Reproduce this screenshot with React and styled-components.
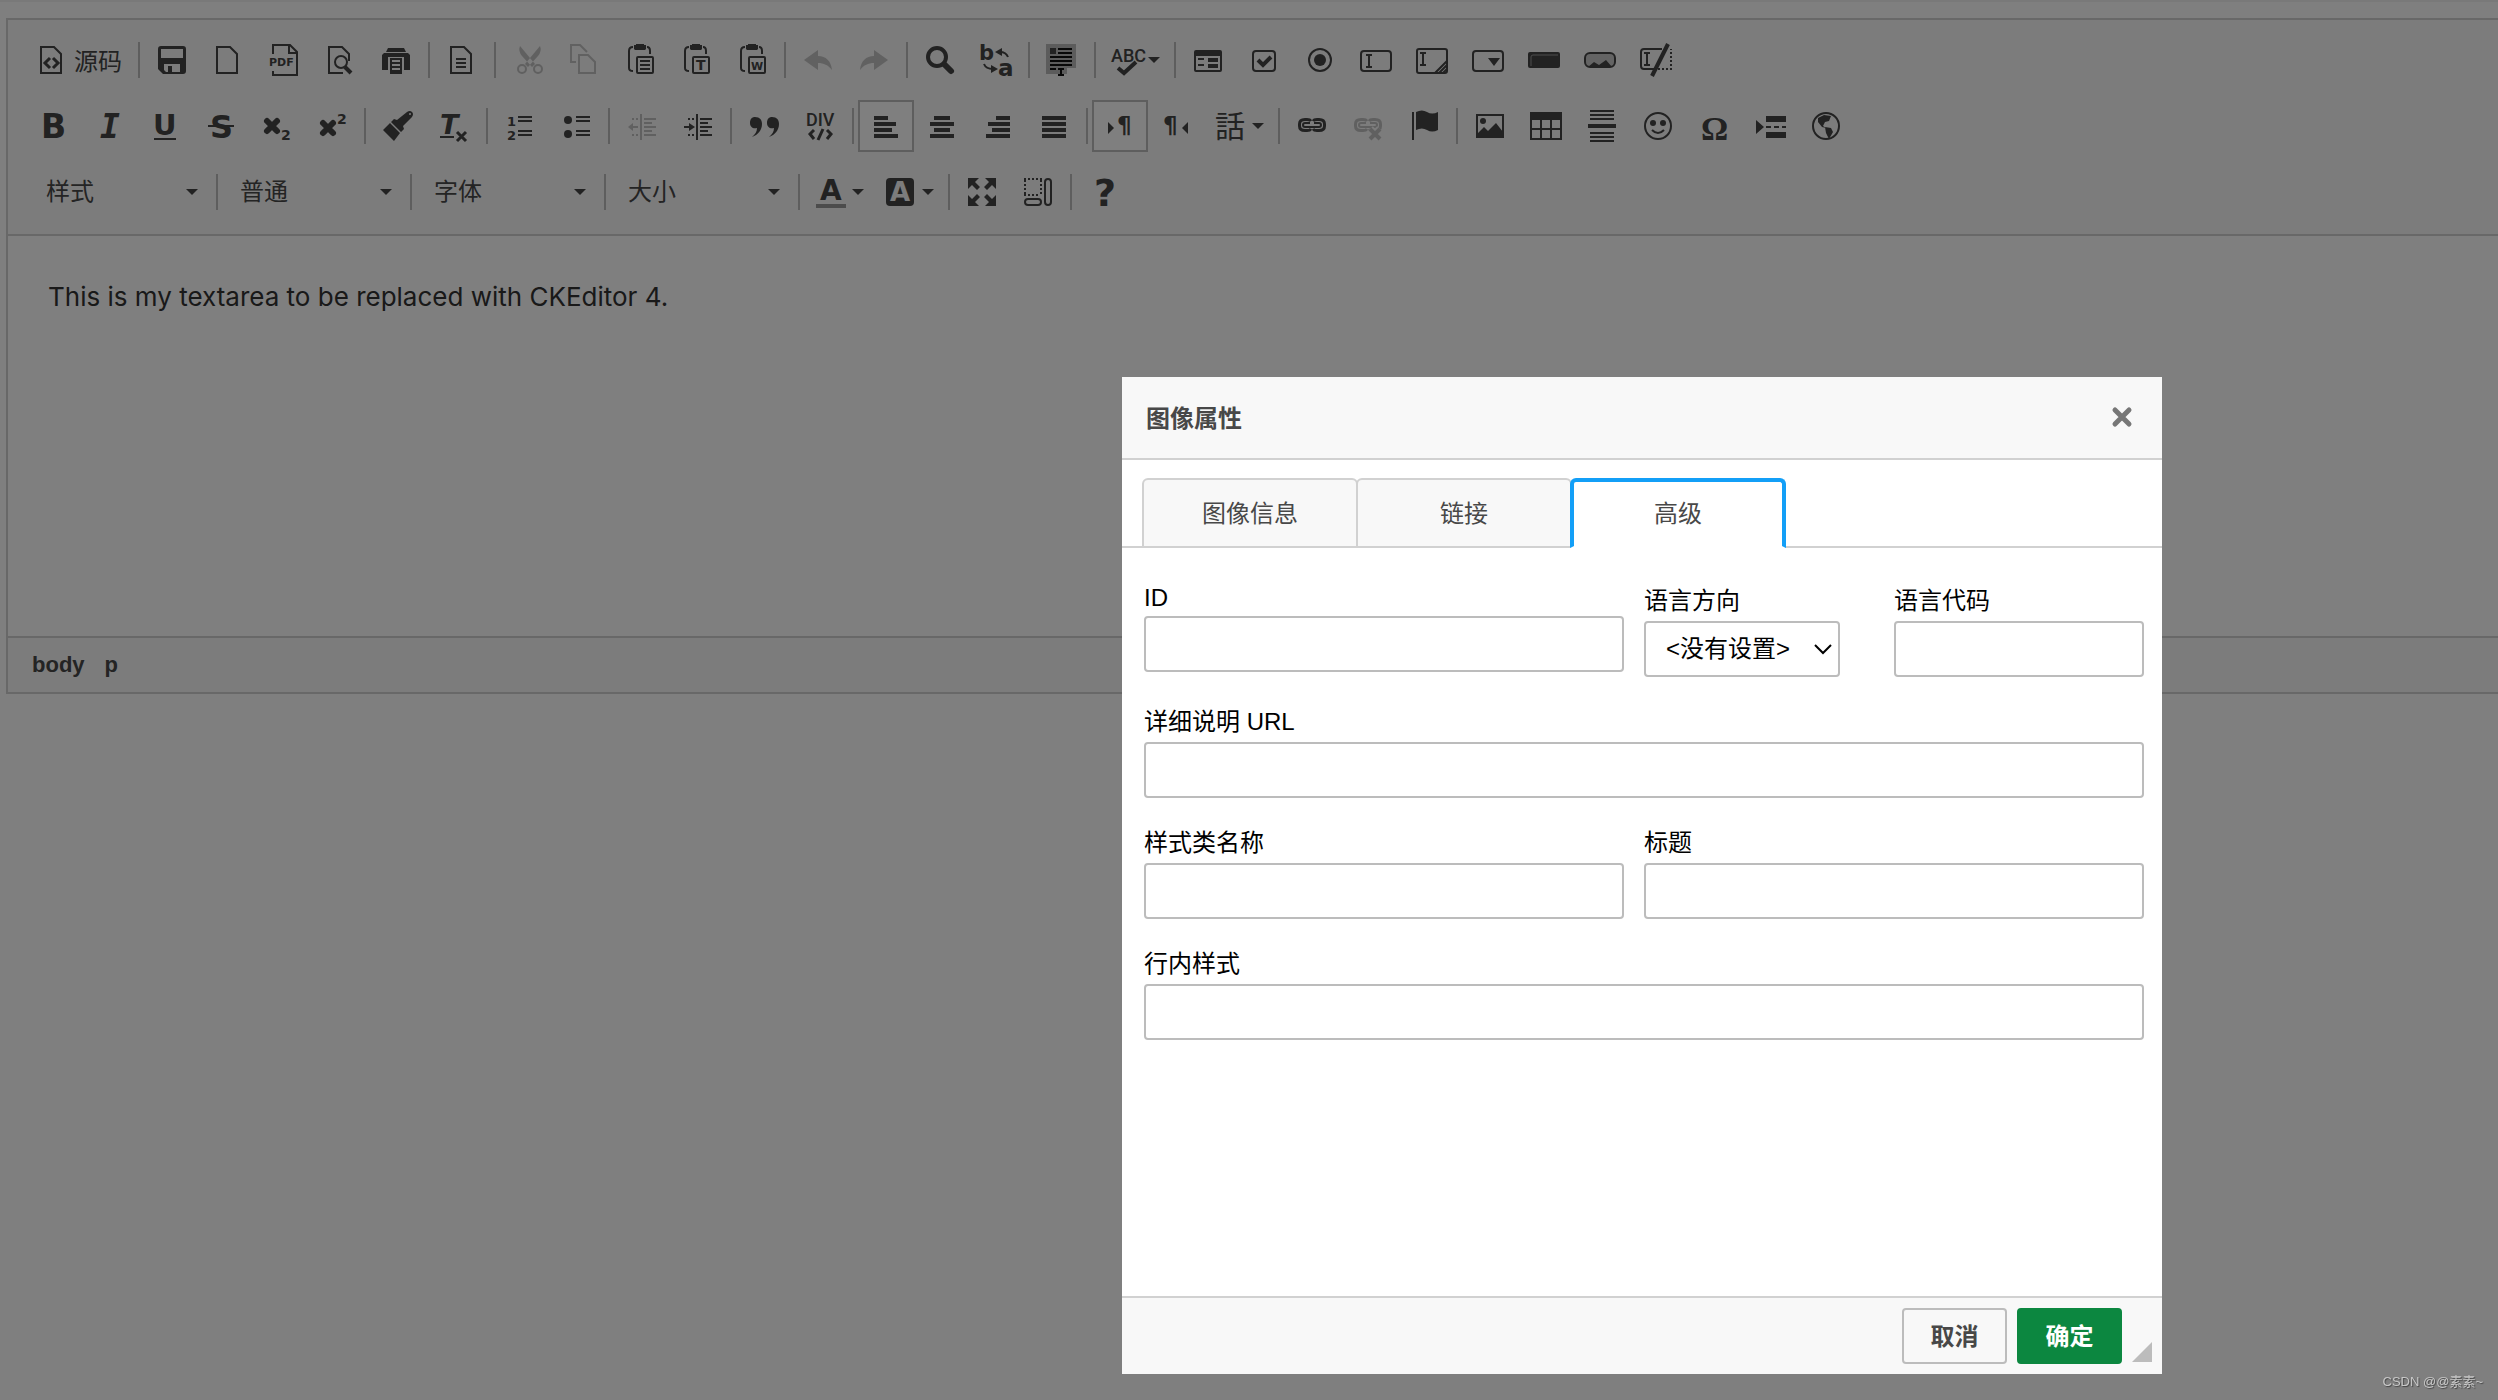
import styled, { createGlobalStyle } from 'styled-components'

const GlobalStyle = createGlobalStyle`
  * {
    box-sizing: border-box;
  }
  body {
    margin: 0;
    background: #fff;
    font-family: 'Liberation Sans', 'Noto Sans CJK SC', sans-serif;
    overflow: hidden;
  }
  button, input, select {
    font: inherit;
    color: inherit;
    margin: 0;
  }
`

const Page = styled.div`
  min-height: 100vh;
  border-top: 2px solid #f2f2f2;
  padding: 16px 0 0 6px;
`

const Editor = styled.main`
  border: 2px solid #d1d1d1;
  border-right: none;
`

const Toolbar = styled.div`
  display: flex;
  flex-direction: column;
  gap: 14px;
  padding: 14px 16px 16px;
  background: #f8f8f8;
  border-bottom: 2px solid #d1d1d1;
`

const ToolRow = styled.div`
  display: flex;
  align-items: center;
  height: 52px;
  padding-left: ${(props) => (props.$indent ? '4px' : '0')};
`

const Separator = styled.span`
  width: 2px;
  height: 36px;
  margin: 0 4px;
  background: #bcbcbc;
`

const ToolButton = styled.button`
  display: flex;
  align-items: center;
  gap: 4px;
  height: 52px;
  padding: 0 10px;
  border: 2px solid ${(props) => (props.$active ? '#bcbcbc' : 'transparent')};
  background: ${(props) => (props.$active ? '#fff' : 'none')};
  color: #444;
  font-size: 24px;
  padding-right: ${(props) => (props.$menu ? '8px' : '10px')};

  &:disabled svg {
    opacity: 0.3;
  }
`

const ToolText = styled.span`
  padding: 0 0 2px 2px;
`

const Icon = styled.svg`
  width: 32px;
  height: 32px;
  flex: none;
  fill: none;
  stroke: currentColor;
  stroke-width: 2;
  overflow: visible;

  text {
    fill: currentColor;
    stroke: none;
    font-family: 'DejaVu Sans', sans-serif;
    font-weight: bold;
  }
  .fill {
    fill: currentColor;
    stroke: none;
  }
`

const CaretIcon = styled.svg`
  width: 12px;
  height: 6px;
  flex: none;
  fill: #444;
`

const Combo = styled.label`
  display: flex;
  align-items: center;
  width: 184px;
  height: 52px;
  padding: 0 14px 0 18px;
  color: #484848;
`

const ComboSelect = styled.select`
  appearance: none;
  flex: 1;
  min-width: 0;
  border: none;
  padding: 0 0 2px;
  background: none;
  font-size: 24px;
`

const Content = styled.div`
  height: 400px;
  padding: 43px 40px;
  font-family: Inter, sans-serif;
  font-size: 26px;
  line-height: 36px;
  color: #333;

  p {
    margin: 0;
  }
`

const PathBar = styled.nav`
  display: flex;
  align-items: center;
  gap: 20px;
  height: 56px;
  padding: 0 24px;
  border-top: 2px solid #d1d1d1;
  background: #f8f8f8;
`

const PathLink = styled.a`
  color: #484848;
  font-size: 22px;
  font-weight: bold;
  text-decoration: none;
`

const Cover = styled.div`
  position: fixed;
  inset: 0;
  display: flex;
  justify-content: flex-end;
  padding: 377px 336px 26px;
  background: rgba(0, 0, 0, 0.5);
`

const Dialog = styled.section`
  display: flex;
  flex-direction: column;
  width: 1040px;
  background: #fff;
  color: #000;
  font-size: 24px;
`

const DialogHeader = styled.header`
  display: flex;
  align-items: center;
  justify-content: space-between;
  height: 83px;
  padding: 0 28px 2px 24px;
  border-bottom: 2px solid #d1d1d1;
  background: #f8f8f8;
  color: #484848;
`

const DialogTitle = styled.h1`
  margin: 0;
  font-size: 24px;
`

const CloseButton = styled.button`
  display: flex;
  padding: 0;
  border: none;
  background: none;
  color: #777;
`

const Tabs = styled.div`
  display: flex;
  height: 88px;
  padding: 18px 20px 0;
  box-shadow: inset 0 -2px 0 #d1d1d1;
`

const Tab = styled.button`
  width: 216px;
  height: 70px;
  padding: 0 0 4px;
  margin-right: -2px;
  border: 2px solid #d1d1d1;
  border-radius: 6px 6px 0 0;
  background: #f8f8f8;
  color: #484848;

  &[aria-selected='true'] {
    border: 4px solid #139ff7;
    border-bottom: 2px solid #fff;
    padding-bottom: 6px;
    background: #fff;
    z-index: 1;
  }
`

const Form = styled.form`
  display: flex;
  flex-direction: column;
  flex: 1;
  gap: 26px;
  padding: 34px 18px 34px 22px;
`

const FormRow = styled.div`
  display: grid;
  grid-template-columns: ${(props) => props.$columns || '1fr'};
  gap: ${(props) => props.$gap || '20px'};
  align-items: start;
`

const Field = styled.div`
  display: flex;
  flex-direction: column;
`

const Label = styled.label`
  padding-bottom: 2px;
  line-height: ${(props) => (props.$latin ? '32px' : '37px')};
`

const TextInput = styled.input`
  width: 100%;
  height: 56px;
  padding: 8px 12px;
  border: 2px solid #bcbcbc;
  border-radius: 4px;
  background: #fff;
`

const SelectBox = styled.div`
  display: flex;
  align-items: center;
  width: 196px;
  height: 56px;
  padding: 0 6px 0 20px;
  border: 2px solid #bcbcbc;
  border-radius: 4px;

  select {
    appearance: none;
    flex: 1;
    min-width: 0;
    padding: 0 0 2px;
    border: none;
    background: none;
  }
`

const DialogFooter = styled.footer`
  display: flex;
  align-items: center;
  justify-content: flex-end;
  gap: 10px;
  height: 78px;
  padding-right: 10px;
  border-top: 2px solid #d1d1d1;
  background: #f8f8f8;
`

const DialogButton = styled.button`
  width: 105px;
  height: 56px;
  padding: 0 0 4px;
  border: 2px solid ${(props) => (props.$primary ? '#0c8740' : '#bcbcbc')};
  border-radius: 4px;
  background: ${(props) => (props.$primary ? '#0c8740' : '#f8f8f8')};
  color: ${(props) => (props.$primary ? '#fff' : '#484848')};
  font-weight: bold;
`

const Grip = styled.svg`
  width: 20px;
  height: 20px;
  align-self: flex-end;
  margin-bottom: 12px;
  fill: #bcbcbc;
`

const Watermark = styled.div`
  position: fixed;
  right: 15px;
  bottom: 8px;
  color: #c8c8c8;
  font-size: 13px;
  line-height: 20px;
  text-shadow: 1px 1px 1px #444;
`

const page = 'M5 3h13l7 7v19H5z'

const Clipboard = ({ children }) => (
  <>
    <path d="M9 3q-4 0-4 4v17q0 3 4 3M23 3q3 0 3 4v3" />
    <path className="fill" d="M12 0h8v1h2v4l-1 1H11l-1-1V1h2z" />
    <rect x="13" y="13" width="16" height="16" rx="1" />
    {children}
  </>
)

const Chain = () => (
  <>
    <path strokeWidth="3" d="M15 11q-1-1.500-4-1.500H9Q3.500 9.500 3.500 14v2Q3.500 20.500 9 20.500h2q3 0 4-1.500M17 11q1-1.500 4-1.500h2Q28.500 9.500 28.500 14v2Q28.500 20.500 23 20.500h-2q-3 0-4-1.500" />
    <path d="M14 13H9q-2 0-2 2t2 2h14q2 0 2-2t-2-2h-5" />
  </>
)

const icons = {
  source: (
    <>
      <path d={page} />
      <path strokeWidth="3" d="M14 14l-5 5 5 5M17 14l5 5-5 5" />
    </>
  ),
  save: (
    <>
      <path
        className="fill"
        fillRule="evenodd"
        d="M5 2h22a3 3 0 013 3v22a3 3 0 01-3 3H7l-5-5V5a3 3 0 013-3zM5 5v9h22V5zM8 20v6l2 2h14v-8z"
      />
      <path className="fill" d="M12 22h4v7h-4z" />
    </>
  ),
  newPage: <path d={page} />,
  pdf: (
    <>
      <path d="M5 10V1h17l7 7v23H5v-4M21 1v8h8" />
      <text x="1" y="22" fontSize="11">PDF</text>
    </>
  ),
  preview: (
    <>
      <path d="M19 29H5V3h13l7 7v7" />
      <circle cx="17" cy="18" r="6" />
      <path strokeWidth="4" d="M21 23l6 6" />
    </>
  ),
  print: (
    <>
      <path className="fill" d="M8 4h16l2 4H6zM4 9h24l2 2v15h-6V13H8v13H2V11z" />
      <path d="M11 15h10v14H11zM12 19h8M12 23h8M11 27h10" />
    </>
  ),
  templates: <path d={`${page}M10 15h10M10 19h10M10 23h10`} />,
  cut: (
    <>
      <path className="fill" d="M8 2q-2 5 2 10l10 11 3-3zM28 2q2 5-2 10L16 23l-3-3z" />
      <circle cx="10" cy="25" r="4" />
      <circle cx="26" cy="25" r="4" />
    </>
  ),
  copy: <path d="M8 18H3V1h9l7 7M11 11h9l7 7v11H11z" />,
  paste: (
    <Clipboard>
      <path d="M16 17h10M16 21h10M16 25h10" />
    </Clipboard>
  ),
  pasteText: (
    <Clipboard>
      <text x="16" y="26" fontSize="14">T</text>
    </Clipboard>
  ),
  pasteWord: (
    <Clipboard>
      <text x="15" y="26" fontSize="11">W</text>
    </Clipboard>
  ),
  undo: <path className="fill" d="M2 16L16 6v6c8 0 13 5 14 14-4-5-8-7-14-7v7z" />,
  redo: <path className="fill" d="M30 16L16 6v6C8 12 3 17 2 26c4-5 8-7 14-7v7z" />,
  find: (
    <>
      <circle cx="13" cy="13" r="9" strokeWidth="4" />
      <path strokeWidth="6" strokeLinecap="round" d="M21 21l6 6" />
    </>
  ),
  replace: (
    <>
      <text x="-1" y="16" fontSize="21">b</text>
      <text x="18" y="32" fontSize="23">a</text>
      <path d="M28 13q-2-5-8-5M4 20q2 5 9 5" />
      <path className="fill" d="M22 4v8l-7-4zM11 21v8l7-4z" />
    </>
  ),
  selectAll: (
    <>
      <path fill="#b8b8b8" stroke="none" d="M0 0h30v24h-9v6H0z" />
      <path className="fill" d="M4 4h6v6H4z" />
      <path stroke="#111" d="M12 5h14M12 9h14M4 13h22M4 17h22M4 21h22M4 25h6M12 25h6M12 31h6M15 25v6" />
    </>
  ),
  spell: (
    <>
      <text x="-1" y="18" fontSize="18" style={{ fontFamily: 'Liberation Sans Narrow, Roboto', fontWeight: 500 }}>ABC</text>
      <path strokeWidth="4" d="M6 24l6 5 12-11" />
    </>
  ),
  form: (
    <>
      <rect x="3" y="7" width="26" height="20" rx="1" />
      <path className="fill" d="M3 7h26v5H3zM16 14h10v4H16zM16 20h10v4H16z" />
      <path d="M6 15h6M6 21h6" />
    </>
  ),
  checkbox: (
    <>
      <rect x="5" y="7" width="22" height="20" rx="3" />
      <path strokeWidth="4" d="M10 16l5 5 8-8" />
    </>
  ),
  radio: (
    <>
      <circle cx="16" cy="16" r="11" />
      <circle className="fill" cx="16" cy="16" r="6" />
    </>
  ),
  textField: (
    <>
      <rect x="1" y="7" width="30" height="20" rx="3" />
      <path d="M6 11h6M6 23h6M9 11v12" />
    </>
  ),
  textArea: (
    <>
      <rect x="1" y="5" width="30" height="24" rx="2" />
      <path d="M4 9h6M4 21h6M7 9v12M19 29l12-12M23 29l8-8M27 29l4-4" />
    </>
  ),
  select: (
    <>
      <rect x="1" y="7" width="30" height="20" rx="3" />
      <path className="fill" d="M16 14h12l-6 8z" />
    </>
  ),
  pushButton: (
    <>
      <rect className="fill" x="0" y="8" width="32" height="16" rx="2" />
      <path stroke="#999" strokeWidth="1" d="M3 22v-9q0-2 2-2h25" />
    </>
  ),
  imageButton: (
    <>
      <rect x="1" y="9" width="30" height="14" rx="5" fill="#c8c8c8" />
      <path className="fill" d="M4 23l6-5 5 3 7-5 6 7z" />
    </>
  ),
  hidden: (
    <>
      <path d="M22 5H4q-3 0-3 3v14q0 3 3 3h11M4 9h6M4 21h6M7 9v12" />
      <path strokeDasharray="2 2" d="M18 25h13V5" />
      <path strokeWidth="4" d="M28 0L12 32" />
    </>
  ),
  bold: <text x="5" y="28" fontSize="33">B</text>,
  italic: <text x="8" y="28" fontSize="33" fontStyle="italic" style={{ fontFamily: 'DejaVu Sans Mono' }}>I</text>,
  underline: (
    <>
      <text x="5" y="25" fontSize="29">U</text>
      <path d="M6 29h22" />
    </>
  ),
  strike: (
    <>
      <text x="6" y="28" fontSize="32">S</text>
      <path d="M4 16h26" />
    </>
  ),
  subscript: (
    <>
      <path strokeWidth="6" strokeLinecap="round" d="M7 11l10 10M17 11L7 21" />
      <text x="21" y="30" fontSize="14">2</text>
    </>
  ),
  superscript: (
    <>
      <path strokeWidth="6" strokeLinecap="round" d="M7 13l10 10M17 13L7 23" />
      <text x="21" y="14" fontSize="14">2</text>
    </>
  ),
  brush: (
    <>
      <path className="fill" d="M25 2q3-2 5 0t0 5l-9 9 1 3-3 3L9 12l3-3 3 1zM8 13l10 10-6 8L1 20z" />
      <circle cx="28" cy="4" r="1" fill="#f8f8f8" stroke="none" />
    </>
  ),
  removeFormat: (
    <>
      <text x="2" y="24" fontSize="27" fontStyle="italic">T</text>
      <path d="M2 27h14" />
      <path strokeWidth="3" d="M19 22l9 9M28 22l-9 9" />
    </>
  ),
  numbered: (
    <>
      <text x="3" y="16" fontSize="13">1</text>
      <text x="3" y="30" fontSize="13">2</text>
      <path d="M14 7h14M14 11h14M14 21h14M14 25h14" />
    </>
  ),
  bulleted: (
    <>
      <circle className="fill" cx="8" cy="10" r="4" />
      <circle className="fill" cx="8" cy="24" r="4" />
      <path d="M16 7h14M16 11h14M16 21h14M16 25h14" />
    </>
  ),
  outdent: (
    <>
      <path d="M15 4v26M18 9h12M18 13h8M18 17h12M18 21h8M18 25h12M6 17h6M6 9h2M10 9h2M6 25h2M10 25h2" />
      <path className="fill" d="M7 13v8l-5-4z" />
    </>
  ),
  indent: (
    <>
      <path d="M15 4v26M18 9h12M18 13h8M18 17h12M18 21h8M18 25h12M2 17h6M6 9h2M10 9h2M6 25h2M10 25h2" />
      <path className="fill" d="M7 13v8l6-4z" />
    </>
  ),
  quote: (
    <path
      className="fill"
      d="M7 7c5 0 7 3 7 7 0 6-4 11-10 13 3-3 5-5 5-9-4 1-7-1-7-5 0-4 2-6 5-6zM24 7c5 0 7 3 7 7 0 6-4 11-10 13 3-3 5-5 5-9-4 1-7-1-7-5 0-4 2-6 5-6z"
    />
  ),
  div: (
    <>
      <text x="2" y="16" fontSize="18" style={{ fontFamily: 'Liberation Sans Narrow, Roboto', fontWeight: 500 }}>DIV</text>
      <path strokeWidth="3" d="M10 20l-4 4 4 5M23 20l4 4-4 5M19 19l-5 11" />
    </>
  ),
  alignLeft: <path strokeWidth="4" d="M4 8h14M4 14h22M4 20h18M4 26h24" />,
  alignCenter: <path strokeWidth="4" d="M8 8h16M4 14h24M8 20h16M4 26h24" />,
  alignRight: <path strokeWidth="4" d="M14 8h14M6 14h22M10 20h18M4 26h24" />,
  alignBlock: <path strokeWidth="4" d="M4 8h24M4 14h24M4 20h24M4 26h24" />,
  ltr: (
    <>
      <path className="fill" d="M4 12v12l6-6z" />
      <text x="13" y="23" fontSize="23">¶</text>
    </>
  ),
  rtl: (
    <>
      <path className="fill" d="M28 12v12l-6-6z" />
      <text x="3" y="23" fontSize="23">¶</text>
    </>
  ),
  language: <text x="-1" y="27" fontSize="30" style={{ fontFamily: 'Noto Sans CJK JP', fontWeight: 400 }}>話</text>,
  link: <Chain />,
  unlink: (
    <>
      <Chain />
      <path strokeWidth="8" stroke="#f8f8f8" d="M18 19l10 10M28 19L18 29" />
      <path strokeWidth="4" d="M18 19l10 10M28 19L18 29" />
    </>
  ),
  anchor: (
    <>
      <path d="M5 2v28" />
      <path className="fill" d="M8 2q6-3 11 0t11 0v18q-6 3-11 0t-11 0z" />
    </>
  ),
  image: (
    <>
      <path d="M3 5h26v22H3z" />
      <circle className="fill" cx="9" cy="11" r="3" />
      <path className="fill" d="M4 27v-4l6-6 4 4 8-8 7 9v5z" />
    </>
  ),
  table: (
    <>
      <path className="fill" d="M0 2h32v8H0z" />
      <path d="M1 3h30v26H1zM1 19h30M11 9v20M21 9v20" />
    </>
  ),
  rule: (
    <>
      <path d="M4 1h24M4 5h24M4 9h24M4 23h24M4 27h24M4 31h24" />
      <path strokeWidth="4" d="M2 16h28" />
    </>
  ),
  smiley: (
    <>
      <circle cx="16" cy="16" r="13" />
      <circle className="fill" cx="11" cy="13" r="3" />
      <circle className="fill" cx="21" cy="13" r="3" />
      <path d="M10 20q6 6 12 0" />
    </>
  ),
  special: <text x="3" y="30" fontSize="34" style={{ fontFamily: 'Liberation Serif' }}>Ω</text>,
  pageBreak: (
    <>
      <path className="fill" d="M2 10l8 7-8 7zM12 6h20v6H12zM12 22h20v6H12z" />
      <path d="M12 17h5M20 17h5M28 17h4" />
    </>
  ),
  iframe: (
    <>
      <circle cx="16" cy="16" r="13" />
      <path className="fill" d="M8 8l6-3 7 1-2 5-4 1-2 4 3 2-4-1-4-5zM15 17l6 1 2 4-4 7-3-6z" />
    </>
  ),
  textColor: (
    <>
      <text x="4" y="24" fontSize="28">A</text>
      <path stroke="#999" strokeWidth="4" d="M0 30h30" />
    </>
  ),
  bgColor: (
    <>
      <rect className="fill" x="0" y="2" width="28" height="28" rx="4" />
      <text x="4" y="25" fontSize="26" style={{ fill: '#f8f8f8' }}>A</text>
    </>
  ),
  maximize: (
    <path
      className="fill"
      d="M2 2h11l-4 4 5 5-3 3-5-5-4 4zM30 2v11l-4-4-5 5-3-3 5-5-4-4zM2 30V19l4 4 5-5 3 3-5 5 4 4zM30 30H19l4-4-5-5 3-3 5 5 4-4z"
    />
  ),
  showBlocks: (
    <>
      <path strokeDasharray="2 2" d="M2 3h18M19 4v16M2 19h16M3 4v14" />
      <rect x="3" y="23" width="16" height="6" rx="3" />
      <rect x="23" y="3" width="6" height="26" rx="3" />
    </>
  ),
  about: <text x="6" y="30" fontSize="38">?</text>,
}

const Caret = () => (
  <CaretIcon viewBox="0 0 12 6">
    <path d="M0 0h12L6 6z" />
  </CaretIcon>
)

const Tool = ({ name, label, menu, active, disabled, children }) => (
  <ToolButton type="button" aria-label={label} $active={active} $menu={menu} disabled={disabled}>
    <Icon viewBox="0 0 32 32">{icons[name]}</Icon>
    {children && <ToolText>{children}</ToolText>}
    {menu && <Caret />}
  </ToolButton>
)

const rows = [
  [
    [{ name: 'source', label: '源码', text: '源码' }],
    ['save', 'newPage', 'pdf', 'preview', 'print'],
    ['templates'],
    [{ name: 'cut', disabled: true }, { name: 'copy', disabled: true }, 'paste', 'pasteText', 'pasteWord'],
    [{ name: 'undo', disabled: true }, { name: 'redo', disabled: true }],
    ['find', 'replace'],
    ['selectAll'],
    [{ name: 'spell', menu: true }],
    ['form', 'checkbox', 'radio', 'textField', 'textArea', 'select', 'pushButton', 'imageButton', 'hidden'],
  ],
  [
    ['bold', 'italic', 'underline', 'strike', 'subscript', 'superscript'],
    ['brush', 'removeFormat'],
    ['numbered', 'bulleted'],
    [{ name: 'outdent', disabled: true }, 'indent'],
    ['quote', 'div'],
    [{ name: 'alignLeft', active: true }, 'alignCenter', 'alignRight', 'alignBlock'],
    [{ name: 'ltr', active: true }, 'rtl', { name: 'language', menu: true }],
    ['link', { name: 'unlink', disabled: true }, 'anchor'],
    ['image', 'table', 'rule', 'smiley', 'special', 'pageBreak', 'iframe'],
  ],
  [
    [{ combo: '样式' }],
    [{ combo: '普通' }],
    [{ combo: '字体' }],
    [{ combo: '大小' }],
    [{ name: 'textColor', menu: true }, { name: 'bgColor', menu: true }],
    ['maximize', 'showBlocks'],
    ['about'],
  ],
]

const ToolItem = ({ item }) => {
  if (typeof item === 'string') return <Tool name={item} label={item} />
  if (item.combo) {
    return (
      <Combo>
        <ComboSelect aria-label={item.combo}>
          <option>{item.combo}</option>
        </ComboSelect>
        <Caret />
      </Combo>
    )
  }
  const { text, label = item.name, ...rest } = item
  return (
    <Tool label={label} {...rest}>
      {text}
    </Tool>
  )
}

const ToolGroup = ({ items, first }) => (
  <>
    {!first && <Separator />}
    {items.map((item, i) => (
      <ToolItem key={i} item={item} />
    ))}
  </>
)

const TextField = ({ id, label, latin }) => (
  <Field>
    <Label htmlFor={id} $latin={latin}>{label}</Label>
    <TextInput id={id} type="text" />
  </Field>
)

const ImageDialog = () => (
  <Dialog role="dialog" aria-labelledby="dialog-title">
    <DialogHeader>
      <DialogTitle id="dialog-title">图像属性</DialogTitle>
      <CloseButton type="button" aria-label="关闭">
        <svg width="24" height="24" fill="none" stroke="currentColor" strokeWidth="5" strokeLinecap="round">
          <path d="M5 5l14 14M19 5L5 19" />
        </svg>
      </CloseButton>
    </DialogHeader>

    <Tabs role="tablist">
      <Tab type="button" role="tab" aria-selected="false">图像信息</Tab>
      <Tab type="button" role="tab" aria-selected="false">链接</Tab>
      <Tab type="button" role="tab" aria-selected="true">高级</Tab>
    </Tabs>

    <Form>
      <FormRow $columns="480fr 500fr">
        <TextField id="img-id" label="ID" latin />
        <FormRow $columns="1fr 1fr" $gap="0">
          <Field>
            <Label htmlFor="img-dir">语言方向</Label>
            <SelectBox>
              <select id="img-dir">
                <option>&lt;没有设置&gt;</option>
              </select>
              <svg width="18" height="12" fill="none" stroke="#000" strokeWidth="2">
                <path d="M1 2l8 8 8-8" />
              </svg>
            </SelectBox>
          </Field>
          <TextField id="img-lang" label="语言代码" />
        </FormRow>
      </FormRow>
      <FormRow>
        <TextField id="img-url" label="详细说明 URL" />
      </FormRow>
      <FormRow $columns="480fr 500fr">
        <TextField id="img-class" label="样式类名称" />
        <TextField id="img-title" label="标题" />
      </FormRow>
      <FormRow>
        <TextField id="img-style" label="行内样式" />
      </FormRow>
    </Form>

    <DialogFooter>
      <DialogButton type="button">取消</DialogButton>
      <DialogButton type="button" $primary>确定</DialogButton>
      <Grip viewBox="0 0 20 20">
        <path d="M20 0v20H0z" />
      </Grip>
    </DialogFooter>
  </Dialog>
)

const App = () => {
  return (
    <>
      <GlobalStyle />
      <Page>
        <Editor>
          <Toolbar role="toolbar">
            {rows.map((groups, i) => (
              <ToolRow key={i} $indent={i === 2}>
                {groups.map((items, j) => (
                  <ToolGroup key={j} items={items} first={j === 0} />
                ))}
              </ToolRow>
            ))}
          </Toolbar>
          <Content>
            <p>This is my textarea to be replaced with CKEditor 4.</p>
          </Content>
          <PathBar>
            <PathLink href="#body">body</PathLink>
            <PathLink href="#p">p</PathLink>
          </PathBar>
        </Editor>
      </Page>
      <Cover>
        <ImageDialog />
      </Cover>
      <Watermark>CSDN @@素素~</Watermark>
    </>
  )
}

export default App
